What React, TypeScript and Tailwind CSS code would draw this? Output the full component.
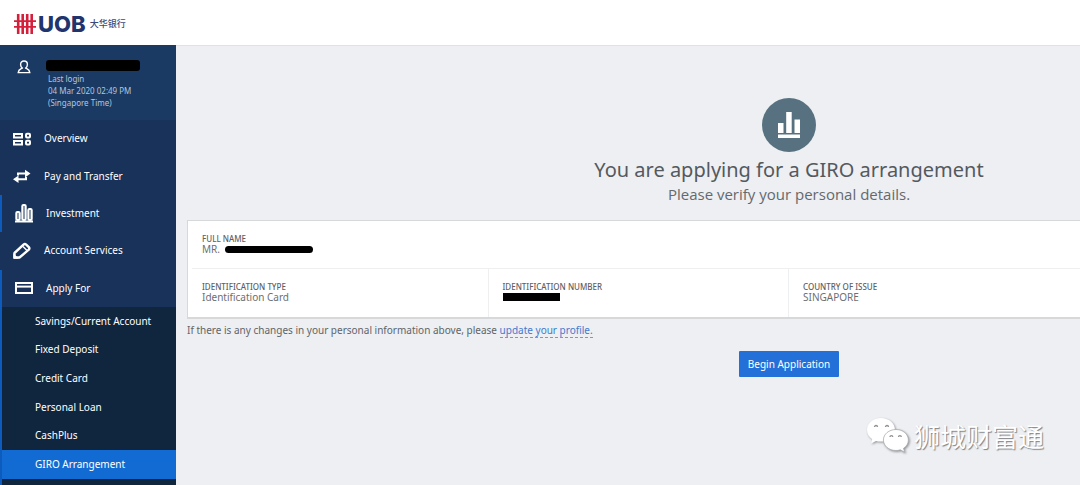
import type { ReactNode } from "react";

interface NavItem {
  label: string;
  icon: ReactNode;
  marked?: boolean;
}

const OverviewIcon = () => (
  <svg width="20" height="14" viewBox="0 0 20 14" fill="none" stroke="white" strokeWidth="2">
    <rect x="2" y="2" width="8" height="3.5" />
    <rect x="2" y="9" width="8" height="3.5" />
    <rect x="14" y="1.8" width="4" height="3.8" rx="1" />
    <rect x="14" y="8.8" width="4" height="3.8" rx="1" />
  </svg>
);

const TransferIcon = () => (
  <svg width="20" height="14" viewBox="0 0 20 14" fill="none" stroke="white" strokeWidth="2">
    <path d="M6 6.500V4.600h8" />
    <path d="M14 8v2.200H5" />
    <path d="M13 .8l5.500 3.800L13 8.400zM6.500 6.400L1 10.200 6.500 14z" fill="white" stroke="none" />
  </svg>
);

const InvestmentIcon = () => (
  <svg width="20" height="20" viewBox="0 0 20 20" fill="none" stroke="white" strokeWidth="2.2">
    <rect x="2.4" y="9" width="3.2" height="8" rx="1" />
    <rect x="8.400" y="2" width="3.2" height="15" rx="1" />
    <rect x="14.400" y="6" width="3.2" height="11" rx="1" />
    <path d="M1 18.500h18" strokeWidth="2" />
  </svg>
);

const PencilIcon = () => (
  <svg width="20" height="18" viewBox="0 0 20 18" fill="none" stroke="white" strokeWidth="2.4">
    <path d="M2.500 15.500v-4.500L11.500 2.600q1.400-1.100 2.700 0l2.600 2.500q1.100 1.300 0 2.600L7.500 15.500z" strokeLinejoin="round" />
    <path d="M11 4.500l4 4" strokeWidth="1.400" />
    <path d="M1.300 16.700v-5.500l5.500 5.500z" fill="white" stroke="none" />
  </svg>
);

const CardIcon = () => (
  <svg width="20" height="14" viewBox="0 0 20 14" fill="none" stroke="white" strokeWidth="2">
    <rect x="2" y="2" width="16" height="10" />
    <path d="M2 5.6h16" />
  </svg>
);

const UserIcon = () => (
  <svg width="14" height="14" viewBox="0 0 14 14" fill="none" stroke="white" strokeWidth="1.4">
    <path d="M7 1C4.800 1 3.600 2.500 3.600 4.500c0 1.500.8 2.800 1.700 3.500C4.500 9 1.500 9 1.200 12.600h11.600C12.500 9 9.500 9 8.700 8c.9-.7 1.700-2 1.700-3.500C10.400 2.500 9.200 1 7 1z" />
  </svg>
);

const WechatIcon = () => (
  <svg width="44" height="38" viewBox="0 0 44 38" className="drop-shadow-[1px_1px_1px_#8f9296]">
    <path
      d="M15 1C7 1 1 6.300 1 13c0 3.800 2 7 5.200 9.200L5 26.500l5-2.600c1.600.5 3.300.7 5 .7 8 0 14-5.200 14-11.700S23 1 15 1z"
      fill="white"
    />
    <path
      d="M30 12.500c-7 0-12.600 4.700-12.600 10.500S23 33.500 30 33.500c1.500 0 3-.2 4.400-.7l4.300 2.500-1.200-4c3-2 4.900-4.900 4.900-8.300 0-5.800-5.500-10.500-12.400-10.500z"
      fill="white"
      stroke="#a9acb0"
      strokeWidth=".8"
    />
    <g fill="none" stroke="#8f9296" strokeWidth="1.300">
      <path d="M8.500 10a1.500 1.500 0 013 0M19.500 10a1.500 1.500 0 013 0M24 20a1.400 1.400 0 012.800 0M32.500 20a1.400 1.400 0 012.800 0" />
    </g>
  </svg>
);

const navItems: NavItem[] = [
  { label: "Overview", icon: <OverviewIcon /> },
  { label: "Pay and Transfer", icon: <TransferIcon /> },
  { label: "Investment", icon: <InvestmentIcon />, marked: true },
  { label: "Account Services", icon: <PencilIcon /> },
  { label: "Apply For", icon: <CardIcon />, marked: true },
];

const subItems = [
  "Savings/Current Account",
  "Fixed Deposit",
  "Credit Card",
  "Personal Loan",
  "CashPlus",
  "GIRO Arrangement",
];

const Header = () => (
  <header className="flex h-[45px] items-center bg-white pl-[14px] pt-[2px]">
    <svg width="22" height="20" viewBox="0 0 22 20" fill="none" stroke="#d5203c" strokeWidth="2.600">
      <path d="M4.200 0v20M8.700 0v20M13.200 0v20M17.700 0v20" />
      <path d="M0 7.200h22M0 12.800h22" strokeWidth="1.800" />
    </svg>
    <span className="ml-[2px] font-[Inter,sans-serif] text-[22px] font-extrabold leading-6 text-[#22346d]">
      UOB
    </span>
    <span className="ml-[4px] font-['Noto_Sans_CJK_SC',sans-serif] text-[9px] font-medium leading-4 text-[#3a4a7c]">
      大华银行
    </span>
  </header>
);

const Sidebar = () => (
  <nav className="w-[176px] shrink-0 bg-[#10263f] text-[10px] text-white">
    <div className="flex h-[75px] bg-[#1b3a63] pl-[17px] pt-[15px]">
      <UserIcon />
      <div className="ml-[15px] text-[8px] leading-3 text-[#b4c5dc]">
        <div className="mb-[2px] h-[11px] w-[94px] rounded-[3px] bg-black" />
        <p className="pl-[2px]">Last login</p>
        <p className="pl-[2px]">04 Mar 2020 02:49 PM</p>
        <p className="pl-[2px]">(Singapore Time)</p>
      </div>
    </div>
    <ul className="grid h-[187px] grid-rows-5 bg-[#183259]">
      {navItems.map((item) => (
        <li key={item.label} className="flex">
          <a
            href="#"
            className={
              item.marked
                ? "flex flex-1 items-center gap-3 border-l-2 border-[#0d5bbd] pl-3"
                : "flex flex-1 items-center gap-3 pl-3"
            }
          >
            {item.icon}
            {item.label}
          </a>
        </li>
      ))}
    </ul>
    <div className="border-l-2 border-[#0d5bbd] pb-[7px]">
      <ul className="grid h-[172px] grid-rows-6">
        {subItems.map((label) => (
          <li key={label} className="flex">
            <a
              href="#"
              className={
                label === "GIRO Arrangement"
                  ? "flex flex-1 items-center bg-[#116bd2] pl-[33px]"
                  : "flex flex-1 items-center pl-[33px]"
              }
            >
              {label}
            </a>
          </li>
        ))}
      </ul>
    </div>
  </nav>
);

const DetailsCard = () => (
  <dl className="mt-4 border border-b-2 border-[#d6d8da] bg-white text-[10px] text-[#6b6f73]">
    <div className="mx-1 h-[48px] border-b border-[#eeeff1] pl-[10px] pt-[13px]">
      <dt className="text-[8px] font-medium leading-[10px] text-[#5d6165]">FULL NAME</dt>
      <dd className="flex items-center leading-[10px]">
        MR.
        <span className="ml-[5px] h-[7px] w-[88px] rounded-full bg-black" />
      </dd>
    </div>
    <div className="grid h-[48px] grid-cols-4">
      <div className="border-r border-[#eeeff1] pl-[14px] pt-[13px]">
        <dt className="text-[8px] font-medium leading-[10px] text-[#5d6165]">IDENTIFICATION TYPE</dt>
        <dd className="leading-[10px]">Identification Card</dd>
      </div>
      <div className="border-r border-[#eeeff1] pl-[14px] pt-[13px]">
        <dt className="text-[8px] font-medium leading-[10px] text-[#5d6165]">IDENTIFICATION NUMBER</dt>
        <dd className="mt-px h-[8px] w-[57px] bg-black" />
      </div>
      <div className="pl-[14px] pt-[13px]">
        <dt className="text-[8px] font-medium leading-[10px] text-[#5d6165]">COUNTRY OF ISSUE</dt>
        <dd className="leading-[10px]">SINGAPORE</dd>
      </div>
    </div>
  </dl>
);

const App = () => {
  return (
    <div className="relative flex min-h-screen flex-col overflow-hidden font-['Noto_Sans',sans-serif]">
      <Header />
      <div className="flex flex-1">
        <Sidebar />
        <main className="min-w-0 flex-1 overflow-hidden border-t border-[#dfe2e6] bg-[#edeff2] pl-[11px]">
          {/* the form is wider than small windows and runs off the right edge */}
          <div className="min-w-[1204px] pt-[52px]">
            <div className="flex flex-col items-center text-[#54595f]">
              <div className="flex size-[54px] items-center justify-center rounded-full bg-[#587180]">
                <svg width="22" height="28" viewBox="0 0 22 28" fill="white">
                  <path d="M0 12h5.500v10H0zM8.200 1h5.500v21H8.200zM16.500 8.500H22V22h-5.500zM0 23.500h22V27H0z" />
                </svg>
              </div>
              <h1 className="mt-[4px] text-[20px] leading-7">You are applying for a GIRO arrangement</h1>
              <p className="font-['Open_Sans',sans-serif] text-[15px] leading-5 text-[#64696e]">
                Please verify your personal details.
              </p>
            </div>
            <DetailsCard />
            <p className="mt-[3px] text-[10px] leading-4 text-[#5f6469]">
              If there is any changes in your personal information above, please{" "}
              <a href="#" className="border-b border-dashed border-[#6b9be0] text-[#4379cd]">
                update your profile.
              </a>
            </p>
            <div className="mt-[13px] flex justify-center">
              <button className="h-[26px] rounded-[1px] bg-[#2370d8] px-[9px] text-[10px] text-white">
                Begin Application
              </button>
            </div>
          </div>
        </main>
      </div>
      <div className="absolute bottom-[31px] right-[36px] flex items-center gap-1">
        <WechatIcon />
        <span className="font-['Noto_Sans_CJK_SC',sans-serif] text-[26px] leading-8 text-white [text-shadow:1px_1px_1px_#7f8286]">
          狮城财富通
        </span>
      </div>
    </div>
  );
};

export default App;
